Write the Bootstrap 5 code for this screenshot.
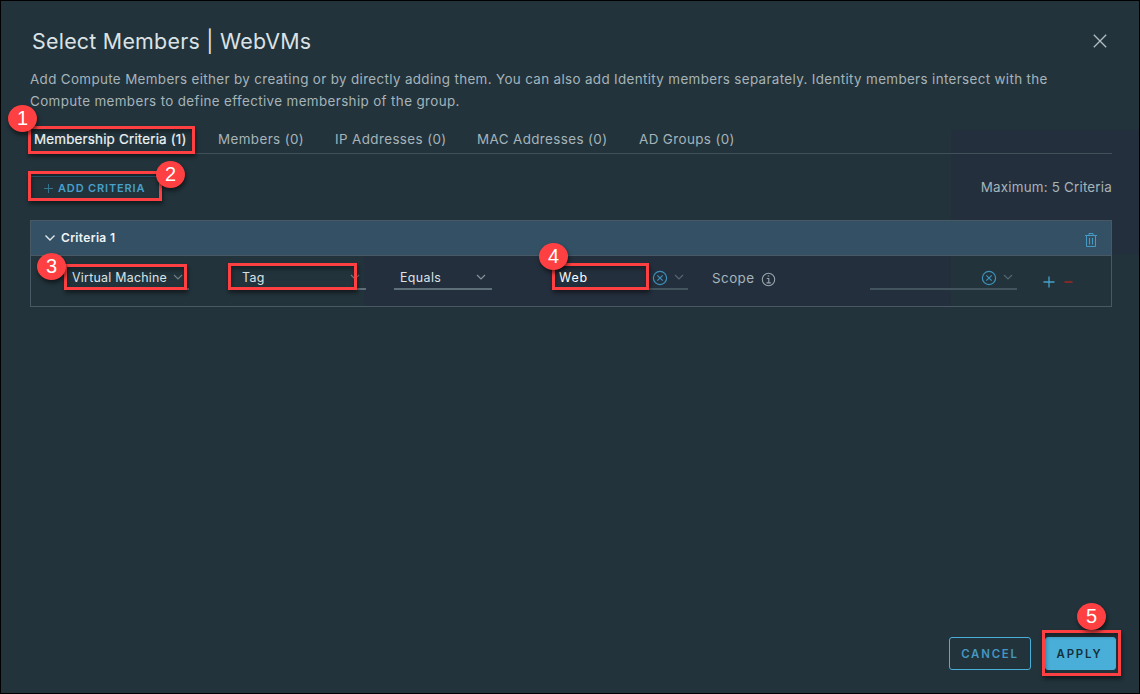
<!DOCTYPE html>
<html lang="en">
<head>
<meta charset="utf-8">
<title>Select Members | WebVMs</title>
<link href="https://cdn.jsdelivr.net/npm/bootstrap@5.3.0/dist/css/bootstrap.min.css" rel="stylesheet">
<style>
body{background:#22333b;color:#a6b4ba;font-family:Inter,"Open Sans",sans-serif;font-size:13.4px;line-height:22px}
.dialog-frame{width:1140px;height:694px;border:1px solid #000;padding:0 27px 0 29px;background:linear-gradient(#242f3d,#242f3d) 950px 129px/189px 124px no-repeat,#22333b}
.fit{white-space:nowrap}
.dialog-head{height:67px;padding:25px 5px 0 2px}
.dialog-title{font-size:21.4px;line-height:30px;color:#dbe2e5;margin:0;letter-spacing:.25px}
.close-x{background:none;border:0;padding:0;width:14px;height:30px;display:flex;align-items:center}
.desc{height:58px}
.desc .fit{display:block;letter-spacing:.354px}
.desc .fit+.fit{letter-spacing:.375px}
.tab-bar{height:28px;border-bottom:1px solid #40515a}
.tab-bar .nav-link{padding:0;color:#a6b4ba;position:relative;line-height:27px;letter-spacing:.4px}
.tab-bar .nav-link.active{color:#eef3f5;-webkit-text-stroke:.2px;letter-spacing:.19px}
.toolbar-row{height:66px;padding-top:22px;letter-spacing:.2px}
.btn-add{width:130px;height:24px;border:1px solid #2b6680;border-radius:2px;color:#489fca;background:none;font-size:11px;font-weight:600;line-height:22px;padding:0 0 0 12px;position:relative;text-align:left;display:flex;align-items:center;letter-spacing:.85px}
.panel{height:87px;border:1px solid #495963}
.panel-head{height:35px;background:#335064;border-bottom:1px solid #495963;padding:0 14px 0 13px;color:#f0f4f6;font-size:12px;font-weight:600;letter-spacing:.32px;line-height:32px}
.panel-body{height:50px;padding:7px 0 0 35px;background:linear-gradient(#242f3d,#242f3d) 333px 0/587px 50px no-repeat}
.field{height:27px;border-bottom:2px solid #5f6f79;color:#dce3e6;font-size:12.4px;line-height:24px;position:relative;display:flex;align-items:center;background:none;padding-top:4px;letter-spacing:.4px}
.field.dim{border-color:#43545f}
.field svg{flex:none}
.dialog-foot{margin-top:330px;margin-right:-4px;gap:14px}
.btn-foot{height:33px;border:1px solid #49afd9;border-radius:3px;padding:1px 0 0;font-size:11.4px;font-weight:600;line-height:30px;position:relative;color:#4498c3;background:none;width:82px;display:flex;justify-content:center;letter-spacing:1.8px}
.btn-foot.apply{background:#49afd9;color:#15303c;width:71px}
.btn-foot.apply .fit{margin-left:-2px}
.mark-box{position:absolute;border:3px solid #fe4042;box-shadow:1px 3px 4px #0007,inset 1px 3px 4px #0005;pointer-events:none;z-index:1}
.num{position:absolute;width:29px;height:27px;border-radius:50%;background:#fe4042;color:#fff;font:20px/27px "Liberation Sans",sans-serif;text-align:center;box-shadow:1px 3px 4px #0008;z-index:2;letter-spacing:0;-webkit-text-stroke:0}
</style>
</head>
<body>
<main class="dialog-frame">
 <header class="dialog-head d-flex justify-content-between align-items-start">
  <h1 class="dialog-title fw-normal"><span class="fit">Select Members | WebVMs</span></h1>
  <button class="close-x" aria-label="Close"><svg width="14" height="14" fill="none" stroke="#b1bec4" stroke-width="1.3"><path d="M.8.8 13.2 13.2M13.2.8.8 13.2"/></svg></button>
 </header>
 <p class="desc mb-0"><span class="fit">Add Compute Members either by creating or by directly adding them. You can also add Identity members separately. Identity members intersect with the</span><span class="fit">Compute members to define effective membership of the group.</span></p>
 <nav class="nav tab-bar flex-nowrap">
  <a class="nav-link active" style="margin-left:4px;width:184px"><span class="fit">Membership Criteria (1)</span><i class="mark-box" style="left:-6px;top:0;width:167px;height:28px"></i><b class="num fw-normal" style="left:-26px;top:-21px">1</b></a>
  <a class="nav-link" style="width:117px"><span class="fit">Members (0)</span></a>
  <a class="nav-link" style="width:142px"><span class="fit">IP Addresses (0)</span></a>
  <a class="nav-link" style="width:162px"><span class="fit">MAC Addresses (0)</span></a>
  <a class="nav-link"><span class="fit">AD Groups (0)</span></a>
 </nav>
 <div class="toolbar-row d-flex justify-content-between align-items-start">
  <button class="btn-add"><svg width="11" height="11" stroke="#36738d"><path d="M5.5 1v9M1 5.5h9"/></svg><span class="fit ms-1">ADD CRITERIA</span><i class="mark-box" style="left:-3px;top:-6px;width:134px;height:30px"></i><b class="num fw-normal" style="left:125px;top:-16px">2</b></button>
  <span class="fit">Maximum: 5 Criteria</span>
 </div>
 <section class="panel">
  <div class="panel-head d-flex align-items-center">
   <svg width="12" height="8" fill="none" stroke="#e1e8eb" stroke-width="1.4"><path d="m1.5 1.5 4.5 4.5 4.5-4.5"/></svg>
   <span class="fit" style="margin-left:5px">Criteria 1</span>
   <svg class="ms-auto mt-1" width="12" height="14" fill="none" stroke="#459bc3"><path d="M0 2.5h12M4 2V.5h4V2M1.5 3v10.5h9V3M4.5 5v6.5M7.5 5v6.5"/></svg>
  </div>
  <div class="panel-body d-flex align-items-start">
   <div class="field" style="width:123px;padding-left:6px"><span class="fit" style="letter-spacing:.25px">Virtual Machine</span><svg class="ms-auto" style="margin-right:6px" width="10" height="7" fill="none" stroke="#6e7d86" stroke-width="1.2"><path d="m1 1 4 4 4-4"/></svg><i class="mark-box" style="left:-2px;top:1px;width:123px;height:26px"></i><b class="num fw-normal" style="left:-29px;top:-10px">3</b></div>
   <div class="field" style="width:137px;margin-left:40px;padding-left:13px"><span class="fit">Tag</span><svg class="ms-auto" style="margin-right:6px" width="10" height="7" fill="none" stroke="#6e7d86" stroke-width="1.2"><path d="m1 1 4 4 4-4"/></svg><i class="mark-box" style="left:-1px;top:0;width:129px;height:27px"></i></div>
   <div class="field" style="width:98px;margin-left:28px;padding-left:6px"><span class="fit">Equals</span><svg class="ms-auto" style="margin-right:6px" width="10" height="7" fill="none" stroke="#84929a" stroke-width="1.2"><path d="m1 1 4 4 4-4"/></svg></div>
   <div class="field dim" style="width:135px;margin-left:61px;padding-left:6px"><span class="fit text-white" style="letter-spacing:.8px">Web</span><svg class="ms-auto" width="16" height="16" fill="none" stroke="#3d91b9" stroke-width="1.2"><circle cx="8" cy="8" r="6.6"/><path d="m5.3 5.3 5.4 5.4m0-5.4-5.4 5.4"/></svg><svg style="margin:0 4px 0 6px" width="10" height="7" fill="none" stroke="#55656e" stroke-width="1.2"><path d="m1 1 4 4 4-4"/></svg><i class="mark-box" style="left:-1px;top:0;width:97px;height:27px"></i><b class="num fw-normal" style="left:-14px;top:-20px">4</b></div>
   <div class="d-flex align-items-center" style="width:182px;height:29px;padding-left:24px;letter-spacing:.45px"><span class="fit">Scope</span><svg style="margin:3px 0 0 6px" width="15" height="15" fill="none" stroke="#98a6ad" stroke-width="1.1"><circle cx="7.5" cy="7.5" r="6.2"/><path d="M5.8 6.5h2v4.2M5.5 10.9h4.3M6.7 4h1.6"/></svg></div>
   <div class="field dim" style="width:147px"><svg class="ms-auto" width="16" height="16" fill="none" stroke="#3d91b9" stroke-width="1.2"><circle cx="8" cy="8" r="6.6"/><path d="m5.3 5.3 5.4 5.4m0-5.4-5.4 5.4"/></svg><svg style="margin:0 4px 0 6px" width="10" height="7" fill="none" stroke="#55656e" stroke-width="1.2"><path d="m1 1 4 4 4-4"/></svg></div>
   <svg style="margin:13px 0 0 26px" width="12" height="12" stroke="#46a1ca" stroke-width="1.3"><path d="M6 .5v11M.5 6h11"/></svg>
   <svg style="margin:13px 0 0 9px" width="9" height="12" stroke="#a5271f" stroke-width="1.5"><path d="M.5 6h8"/></svg>
  </div>
 </section>
 <footer class="dialog-foot d-flex justify-content-end">
  <button class="btn-foot"><span class="fit">CANCEL</span></button>
  <button class="btn-foot apply"><span class="fit">APPLY</span><i class="mark-box" style="left:-4px;top:-8px;width:79px;height:46px"></i><b class="num fw-normal" style="left:31px;top:-35px">5</b></button>
 </footer>
</main>
<script src="https://cdn.jsdelivr.net/npm/bootstrap@5.3.0/dist/js/bootstrap.bundle.min.js"></script>
</body>
</html>
